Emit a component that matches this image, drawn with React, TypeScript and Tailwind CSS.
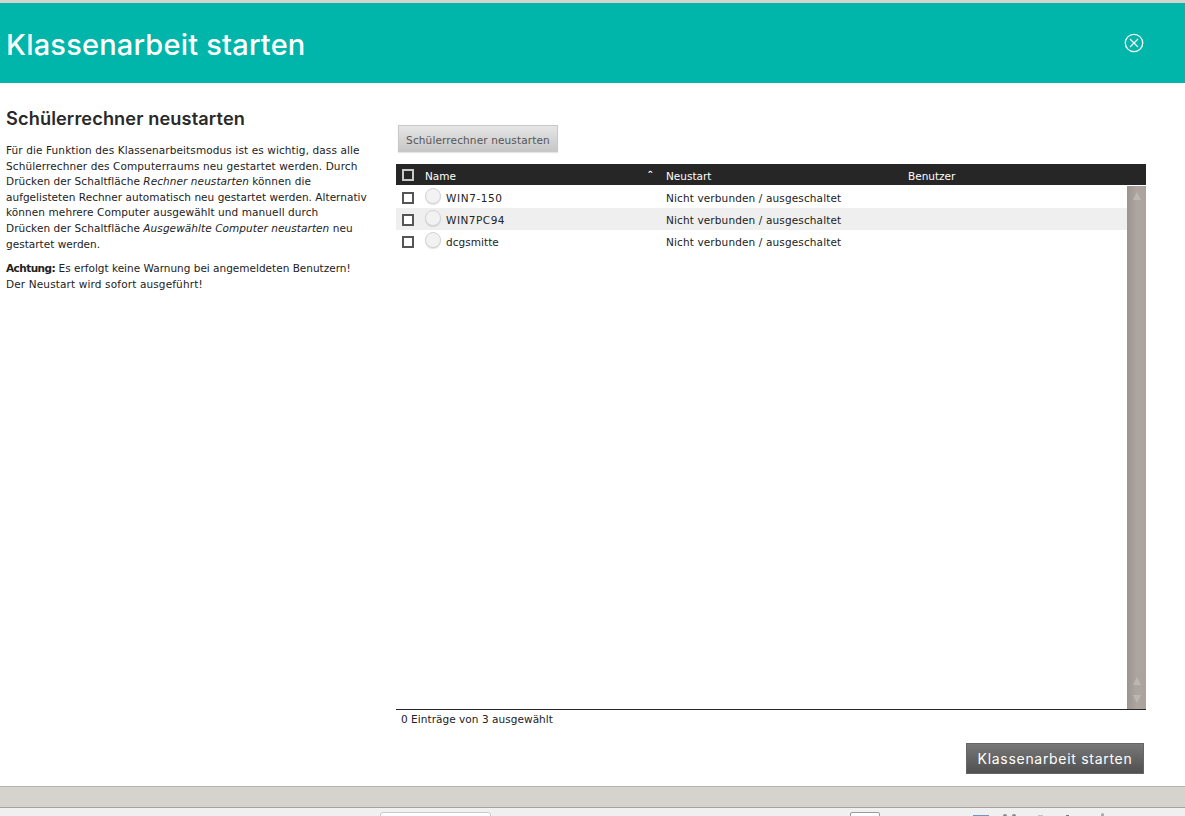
const sans = "font-['DejaVu_Sans',sans-serif]";

function Box({ dark }: { dark?: boolean }) {
  return (
    <span
      className={`block w-[12px] h-[12px] border-2 ${dark ? "border-[#c9c9c9]" : "border-[#555555] bg-white"}`}
    />
  );
}

function Row({ name, alt, nameClass }: { name: string; alt?: boolean; nameClass: string }) {
  return (
    <div className={`flex items-center h-[22px] ${alt ? "bg-[#efefef]" : ""}`}>
      <div className="w-[24px] pl-[6px] pt-[2px] shrink-0">
        <Box />
      </div>
      <span className="w-[16px] h-[16px] rounded-full border border-[#d4d4d4] bg-[#f2f2f2] shadow-[0_1px_1px_rgba(0,0,0,0.12)] shrink-0 -mt-[3px] ml-[5px]" />
      <span className={`ml-[5px] w-[220px] shrink-0 pt-[4px] ${nameClass}`}>{name}</span>
      <span className="pt-[4px]">Nicht verbunden / ausgeschaltet</span>
    </div>
  );
}

export default function App() {
  return (
    <div className={`h-[816px] w-[1185px] overflow-hidden bg-white flex flex-col text-[#222222] ${sans}`}>
      <div className="h-[3px] bg-[#d6d3cf] shrink-0" />
      <header className="h-[80px] bg-[#00b5aa] flex items-center justify-between pl-[6px] pr-[41px] shrink-0">
        <h1 className="text-[29px] pt-[4px] font-medium text-white font-['Inter',sans-serif] tracking-[0.2px]">Klassenarbeit starten</h1>
        <svg width="20" height="20" viewBox="0 0 20 20" fill="none" stroke="white" className="-mt-[1px]">
          <circle cx="10" cy="10" r="8.7" strokeWidth="1.3" />
          <path d="M6 6l8 8M14 6l-8 8" strokeWidth="1.2" />
        </svg>
      </header>
      <main className="flex-1 flex min-h-0">
        <aside className="w-[396px] shrink-0 pl-[6px] pr-[26px] pt-[24px] text-[10.5px] leading-[15.6px] tracking-[0.11px]">
          <h2 className="text-[18.2px] leading-[22px] font-semibold text-[#2a2a2a] font-['Inter',sans-serif] mb-[14px]">Schülerrechner neustarten</h2>
          <p className="whitespace-nowrap">
            Für die Funktion des Klassenarbeitsmodus ist es wichtig, dass alle<br />
            Schülerrechner des Computerraums neu gestartet werden. Durch<br />
            <span className="tracking-[0.07px]">Drücken der Schaltfläche <em>Rechner neustarten</em> können die</span><br />
            <span className="tracking-[0.03px]">aufgelisteten Rechner automatisch neu gestartet werden. Alternativ</span><br />
            <span className="tracking-[0.09px]">können mehrere Computer ausgewählt und manuell durch</span><br />
            <span className="tracking-[0.07px]">Drücken der Schaltfläche <em>Ausgewählte Computer neustarten</em> neu</span><br />
            <span className="tracking-[0.02px]">gestartet werden.</span>
          </p>
          <p className="mt-[9px] whitespace-nowrap">
            <strong className="tracking-[-0.55px]">Achtung:</strong> <span className="tracking-[0px]">Es erfolgt keine Warnung bei angemeldeten Benutzern!</span><br />
            <span className="tracking-[0.14px]">Der Neustart wird sofort ausgeführt!</span>
          </p>
        </aside>
        <section className="flex-1 flex flex-col pt-[42px] pr-[39px] min-w-0">
          <button className="self-start ml-[2px] h-[27px] w-[160px] pt-[5px] border border-[#c8c8c8] bg-gradient-to-b from-[#e6e6e6] to-[#c6c6c6] text-[10.5px] text-[#555555] tracking-[0.14px] shadow-[0_1px_1px_rgba(0,0,0,0.1)]">
            Schülerrechner neustarten
          </button>
          <div className="mt-[12px] h-[21px] bg-[#262626] text-white flex items-center text-[10.5px] shrink-0">
            <div className="w-[29px] pl-[6px] pr-[5px] shrink-0"><Box dark /></div>
            <span className="w-[241px] shrink-0 flex justify-between pr-[12px] pt-[5px]">Name<span className="text-[9px] leading-[14px] -mt-[2px] font-bold">⌃</span></span>
            <span className="w-[242px] shrink-0 pt-[5px]">Neustart</span>
            <span className="pt-[5px]">Benutzer</span>
          </div>
          <div className="h-[525px] relative flex text-[10.5px] tracking-[0.13px] border-b border-[#262626] shrink-0">
            <div className="flex-1 min-w-0 pt-[1px]">
              <Row name="WIN7-150" nameClass="tracking-[0.6px]" />
              <Row name="WIN7PC94" nameClass="tracking-[0.5px]" alt />
              <Row name="dcgsmitte" nameClass="tracking-[0.05px]" />
            </div>
            <div className="w-[19px] mt-[1px] bg-gradient-to-r from-[#9d948e] via-[#aca5a0] to-[#a9a29d] flex flex-col items-center justify-between shrink-0 pt-[6px] pb-[6px]">
              <span className="w-0 h-0 border-x-[4px] border-x-transparent border-b-[8px] border-b-[#bdb7b2]" />
              <div className="flex flex-col gap-[10px]">
                <span className="block w-0 h-0 border-x-[4px] border-x-transparent border-b-[8px] border-b-[#bdb7b2]" />
                <span className="block w-0 h-0 border-x-[4px] border-x-transparent border-t-[8px] border-t-[#bdb7b2]" />
              </div>
            </div>
          </div>
          <div className="pl-[5px] pt-[2px] text-[10.5px] tracking-[0.05px] leading-[14px]">0 Einträge von 3 ausgewählt</div>
          <div className="flex justify-end mt-[17px] mr-[2px]">
            <button className="w-[178px] h-[31px] border border-[#666666] bg-gradient-to-b from-[#787878] to-[#505050] text-white text-[14px] font-['Inter',sans-serif] tracking-[0.7px]">
              Klassenarbeit starten
            </button>
          </div>
        </section>
      </main>
      <div className="h-[22px] shrink-0 bg-[#d6d2ce] border-t border-t-[#b5b1ad] border-b border-b-[#a6a29f]" />
      <div className="h-[8px] shrink-0 bg-[#f0f0f0] relative overflow-hidden">
        <div className="absolute left-[380px] top-[4px] w-[111px] h-[12px] bg-white border border-[#cccccc] rounded-t-[3px]" />
        <div className="absolute left-[850px] top-[4px] w-[30px] h-[12px] bg-white border border-[#999999] rounded-t-[2px]" />
        <div className="absolute left-[973px] top-[7px] w-[16px] h-[1px] bg-[#6f93c4]" />
        <div className="absolute left-[1003px] top-[6px] w-[4px] h-[2px] bg-[#888888] rounded-t-full" />
        <div className="absolute left-[1012px] top-[6px] w-[4px] h-[2px] bg-[#888888] rounded-t-full" />
        <div className="absolute left-[1038px] top-[7px] w-[5px] h-[1px] bg-[#c4c4c4]" />
        <div className="absolute left-[1066px] top-[7px] w-[3px] h-[1px] bg-[#777777]" />
        <div className="absolute left-[1101px] top-[5px] w-[3px] h-[3px] bg-[#aaaaaa] rounded-t-full" />
      </div>
    </div>
  );
}
